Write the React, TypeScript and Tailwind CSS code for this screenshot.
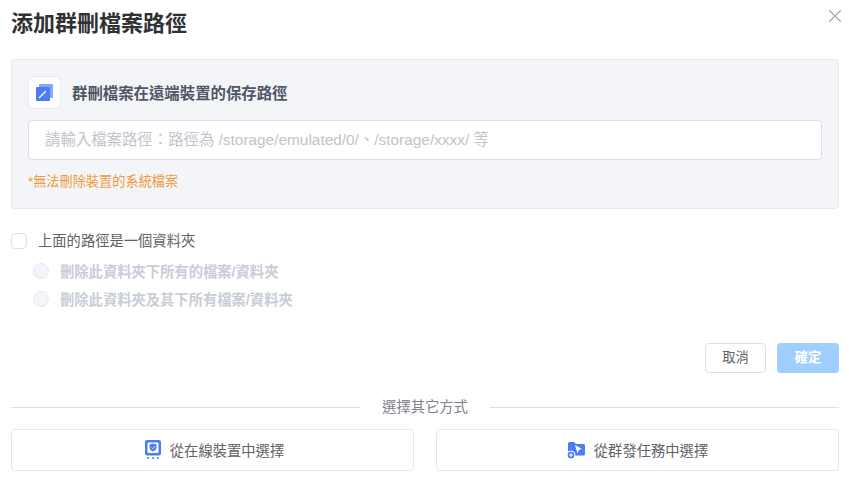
import { X } from 'lucide-react'

const font = { fontFamily: '"Liberation Sans", "Noto Sans CJK TC", sans-serif' }

function FolderIcon() {
  return (
    <svg width="18" height="18" viewBox="0 0 18 18" className="shrink-0">
      <path d="M1 2.5 Q1 1 2.5 1 H7 L9 3 H16.5 Q18 3 18 4.5 V13 Q18 14.5 16.5 14.5 H2.5 Q1 14.5 1 13 Z" fill="#4b7df0" />
      <path d="M8 4 L15 8 L11.8 9 L10.5 12.5 Z" fill="#ffffff" />
      <circle cx="4" cy="14" r="4" fill="#4b7df0" stroke="#ffffff" strokeWidth="1" />
      <path d="M2 14 H6 M4 12 V16" stroke="#ffffff" strokeWidth="1" />
    </svg>
  )
}

function DeviceIcon() {
  return (
    <svg width="16" height="19" viewBox="0 0 16 19" className="mb-[2px] ml-[4px] shrink-0">
      <rect x="0" y="0" width="16" height="15.5" rx="2" fill="#4b7df0" />
      <rect x="2.5" y="2.5" width="11" height="10.5" rx="1" fill="#ffffff" />
      <path d="M4.5 4.5 L8 3.5 L11.5 4.5 V7.5 Q11.5 10 8 11.5 Q4.5 10 4.5 7.5 Z" fill="#4b7df0" />
      <path d="M6.5 7.5 L7.7 8.7 L9.7 6.3" stroke="#ffffff" strokeWidth="0.8" fill="none" />
      <path d="M2 18 H4 M7 18 H9 M12 18 H14" stroke="#4b7df0" strokeWidth="1.5" />
    </svg>
  )
}

function PathIcon() {
  return (
    <svg width="17" height="17" viewBox="0 0 17 17" className="mb-[1px]">
      <rect x="3" y="0" width="14" height="14" rx="1" fill="#86a8f6" />
      <rect x="0" y="3" width="14" height="14" rx="1" fill="#4b7df0" />
      <path d="M3 14 L10 7" stroke="#ffffff" strokeWidth="1.2" />
    </svg>
  )
}

function RadioRow({ label }: { label: string }) {
  return (
    <div className="flex h-[28px] items-center gap-[11px] pl-[22px]">
      <div className="h-4 w-4 rounded-full border border-[#e6e9f1] bg-[#f3f5fa]" />
      <span className="pt-[3px] text-[14.3px] font-bold text-[#c9cdd7]">{label}</span>
    </div>
  )
}

export default function App() {
  return (
    <div style={font} className="relative h-[483px] w-[849px] overflow-hidden bg-white pl-[11px] pr-[10px] pt-[9px]">
      <button className="absolute right-[3px] top-[5px] text-[#9ea3ad]">
        <X size={22} strokeWidth={1.2} />
      </button>

      <h1 className="text-[22px] font-bold leading-[30px] text-[#303133]">添加群刪檔案路徑</h1>

      <section className="mt-[20px] h-[150px] rounded border border-[#e6e8ee] bg-[#f4f5f9] px-4 pt-4">
        <div className="flex items-center gap-[11px]">
          <div className="flex h-[33px] w-[33px] items-center justify-center rounded-md border border-[#e9ebf0] bg-white">
            <PathIcon />
          </div>
          <span className="pt-[2px] text-[15.4px] font-bold text-[#4f5665]">群刪檔案在遠端裝置的保存路徑</span>
        </div>
        <input
          readOnly
          placeholder="請輸入檔案路徑：路徑為 /storage/emulated/0/、/storage/xxxx/ 等"
          className="mt-[11px] block h-10 w-full rounded border border-[#dcdfe6] bg-white px-4 text-[15.4px] text-[#606266] outline-none placeholder:text-[#c0c4cc]"
        />
        <p className="mt-[13px] text-[13.2px] leading-[18px] text-[#ef9a3c]">*無法刪除裝置的系統檔案</p>
      </section>

      <div className="mt-[23px] flex h-[18px] items-center gap-[11px]">
        <div className="h-4 w-4 rounded-sm border border-[#dcdfe6] bg-white" />
        <span className="pt-[2px] text-[14.3px] text-[#606266]">上面的路徑是一個資料夾</span>
      </div>

      <div className="mt-[7px] flex flex-col">
        <RadioRow label="刪除此資料夾下所有的檔案/資料夾" />
        <RadioRow label="刪除此資料夾及其下所有檔案/資料夾" />
      </div>

      <div className="mt-[30px] flex justify-end gap-[11px]">
        <button className="h-[30px] w-[61px] rounded border border-[#dcdfe6] bg-white text-[13.2px] text-[#606266]">取消</button>
        <button className="h-[30px] w-[62px] rounded bg-[#a0cfff] text-[13.2px] font-bold text-white">確定</button>
      </div>

      <div className="mt-[24px] flex items-center gap-[22px]">
        <div className="h-px flex-1 bg-[#dcdfe6]" />
        <span className="text-[14.3px] leading-[20px] text-[#7d828c]">選擇其它方式</span>
        <div className="h-px flex-1 bg-[#dcdfe6]" />
      </div>

      <div className="mt-[12px] flex gap-[22px]">
        <button className="flex h-[42px] flex-1 items-center justify-center gap-[9px] rounded border border-[#e4e7ed] bg-white text-[14.3px] text-[#606266]">
          <DeviceIcon />
          <span className="pt-[4px]">從在線裝置中選擇</span>
        </button>
        <button className="flex h-[42px] flex-1 items-center justify-center gap-[9px] rounded border border-[#e4e7ed] bg-white text-[14.3px] text-[#606266]">
          <FolderIcon />
          <span className="pt-[4px]">從群發任務中選擇</span>
        </button>
      </div>
    </div>
  )
}
